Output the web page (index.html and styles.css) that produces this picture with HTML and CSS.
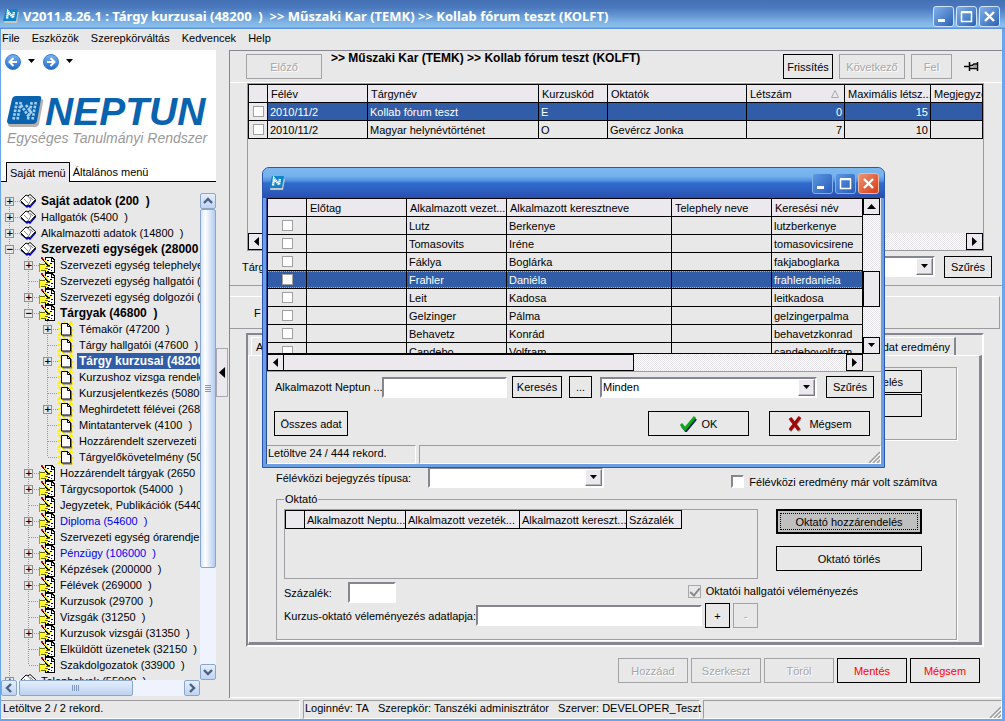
FILE: index.html
```html
<!DOCTYPE html>
<html lang="hu">
<head>
<meta charset="utf-8">
<title>Neptun</title>
<link rel="stylesheet" href="styles.css">
</head>
<body>
<svg class="defs" aria-hidden="true">
  <defs>
    <linearGradient id="ball" x1="0" y1="0" x2="0" y2="1"><stop offset="0" stop-color="#7fb4ee"/><stop offset="1" stop-color="#1d69cc"/></linearGradient>
    <symbol id="i-app" viewBox="0 0 16 16">
      <path d="M3 4h13l-2 11H1z" fill="#c8c4be"/>
      <path d="M3 1h12l-2 12H0z" fill="#0f86cc"/>
      <path d="M4 10.500l1-7 5 6 1-6" fill="none" stroke="#fff" stroke-width="2.400" stroke-dasharray="1.500 .4"/>
    </symbol>
    <symbol id="i-book" viewBox="0 0 16 14">
      <path d="M1 8l6 5 1-1 2 1 6-7" fill="none" stroke="#0000c8" stroke-width="1.500"/>
      <path d="M.5 6.500L6 1l2 1 2-1.500 5.500 5L10 11.500l-2-.5-2 1z" fill="#fff" stroke="#000"/>
      <path d="M8 2l3 4-3 5M4 5l4 4M10 3l3 3" fill="none" stroke="#555" stroke-width=".7"/>
    </symbol>
    <symbol id="i-hand" viewBox="0 0 16 16" shape-rendering="crispEdges">
      <path d="M6 .5h7l2.500 2.500v12.500H6z" fill="#fff" stroke="#000"/>
      <path d="M12.500 1v3H15M8 3h2M11 6h2M9 12h2M12 10h2M8 14h2M12 13h1" fill="none" stroke="#000"/>
      <path d="M1 6h4l2 1h5v2H9v3l-2 2H1z" fill="#ffff2a"/>
      <path d="M1 7h5M7 9h4M6 11h3M2 13.500h5" stroke="#6c6c00" fill="none"/>
      <path d="M.5 6v9" stroke="#00c8d8"/>
      <path d="M3 1l7 8" stroke="#000" stroke-width="2"/>
      <path d="M4 1l6 7" stroke="#ffe800"/><path d="M2 0h2v2H2z" fill="#d00"/>
    </symbol>
    <symbol id="i-page" viewBox="0 0 16 16">
      <path d="M0 1l4 4M6 0l1 3M14 0l-3 3M11 4l4-1M0 8h4M0 15l4-4M12 9h4M12 12l3 3M5 13v3M11 14l1 2" stroke="#fff000" stroke-width="2"/>
      <path d="M5 15h9M13.500 6v9" stroke="#777"/>
      <path d="M3.500 2.500h6l3 3v8.500h-9z" fill="#fff" stroke="#000"/>
      <path d="M9.500 2.500v3h3" fill="none" stroke="#000"/>
    </symbol>
    <symbol id="i-min" viewBox="0 0 19 19"><path d="M4 12h7v3H4z" fill="#fff"/></symbol>
    <symbol id="i-max" viewBox="0 0 19 19"><path d="M4 5.500h10.500v9H4.500V5M4 5h11" fill="none" stroke="#fff" stroke-width="1.500"/><path d="M4 4h11v2H4z" fill="#fff"/></symbol>
    <symbol id="i-x" viewBox="0 0 19 19"><path d="M5 5l9 9M14 5l-9 9" stroke="#fff" stroke-width="2.400"/></symbol>
    <symbol id="i-down" viewBox="0 0 9 5"><path d="M1 0h7L4.500 4z"/></symbol>
    <symbol id="i-up" viewBox="0 0 9 5"><path d="M0 5h9L4.500 0z"/></symbol>
    <symbol id="i-left" viewBox="0 0 5 9"><path d="M5 0v9L0 4.500z"/></symbol>
    <symbol id="i-right" viewBox="0 0 5 9"><path d="M0 0v9l5-4.500z"/></symbol>
    <symbol id="i-chev" viewBox="0 0 10 10"><path d="M1 7l4-4 4 4" fill="none" stroke="#4d6185" stroke-width="2.400"/></symbol>
    <symbol id="i-grip" viewBox="0 0 12 12"><path d="M1 12L12 1M5 12l7-7M9 12l3-3" stroke="#9c9c9c" stroke-width="1.500"/><path d="M3 12l9-9M7 12l5-5" stroke="#fff"/></symbol>
  </defs>
</svg>

<div class="window">
  <header class="titlebar">
    <svg class="i16"><use href="#i-app"/></svg>
    <h1>V2011.8.26.1 : Tárgy kurzusai (48200&nbsp; )&nbsp; &gt;&gt; Műszaki Kar (TEMK) &gt;&gt; Kollab fórum teszt (KOLFT)</h1>
    <div class="winbtns">
      <button type="button" aria-label="Kis méret"><svg><use href="#i-min"/></svg></button>
      <button type="button" aria-label="Teljes méret"><svg><use href="#i-max"/></svg></button>
      <button type="button" aria-label="Bezárás"><svg><use href="#i-x"/></svg></button>
    </div>
  </header>
  <nav class="menubar">
    <a href="#">File</a><a href="#">Eszközök</a><a href="#">Szerepkörváltás</a><a href="#">Kedvencek</a><a href="#">Help</a>
  </nav>

  <div class="main">
    <aside class="sidebar">
      <div class="brand">
        <div class="history">
          <button type="button" aria-label="Vissza"><svg class="i16" viewBox="0 0 16 16"><circle cx="8" cy="8" r="7.500" fill="url(#ball)" stroke="#3a7cd0"/><path d="M8.500 4L4.500 8l4 4M4.500 8H12" fill="none" stroke="#fff" stroke-width="2"/></svg></button>
          <svg class="drop"><use href="#i-down"/></svg>
          <button type="button" aria-label="Előre"><svg class="i16" viewBox="0 0 16 16"><circle cx="8" cy="8" r="7.500" fill="url(#ball)" stroke="#3a7cd0"/><path d="M7.500 4l4 4-4 4M11.500 8H4" fill="none" stroke="#fff" stroke-width="2"/></svg></button>
          <svg class="drop"><use href="#i-down"/></svg>
        </div>
        <div class="logo">
          <svg class="emblem" viewBox="0 0 37 32">
            <path d="M9 3h25q3 0 2 3l-4 22q-1 3-4 3H4q-3 0-3-3z" fill="#b5b3b2"/>
            <path d="M9 0h23q3 0 2 3l-4 22q-1 3-4 3H3q-3 0-3-3L5 3q1-3 4-3z" fill="#0a63ae"/>
            <path d="M6.500 23.500L10 5M10.500 23.500L14 5M14 9l8 12M19 9l6 9M21 23.500L25 5M25.500 23.500L29 5" fill="none" stroke="#a9d0ee" stroke-width="2.600" stroke-dasharray="2.600 1.200"/>
          </svg>
          <span class="logo-name">NEPTUN</span>
        </div>
        <p class="tagline">Egységes Tanulmányi Rendszer</p>
        <div class="menutabs"><button type="button" class="on">Saját menü</button><button type="button">Általános menü</button></div>
      </div>
      <div class="treebox">
        <ul class="tree">
          <li class="l0 first"><b class="pm">+</b><svg><use href="#i-book"/></svg><a href="#" class="bold">Saját adatok (200&nbsp; )</a></li>
          <li class="l0"><b class="pm">+</b><svg><use href="#i-book"/></svg><a href="#">Hallgatók (5400&nbsp; )</a></li>
          <li class="l0"><b class="pm">+</b><svg><use href="#i-book"/></svg><a href="#">Alkalmazotti adatok (14800&nbsp; )</a></li>
          <li class="l0"><b class="pm">−</b><svg><use href="#i-book"/></svg><a href="#" class="bold">Szervezeti egységek (28000&nbsp; )</a></li>
          <li class="l1"><b class="pm">+</b><svg><use href="#i-hand"/></svg><a href="#">Szervezeti egység telephelyei</a></li>
          <li class="l1"><b></b><svg><use href="#i-hand"/></svg><a href="#">Szervezeti egység hallgatói (2</a></li>
          <li class="l1"><b class="pm">+</b><svg><use href="#i-hand"/></svg><a href="#">Szervezeti egység dolgozói (2</a></li>
          <li class="l1"><b class="pm">−</b><svg><use href="#i-hand"/></svg><a href="#" class="bold">Tárgyak (46800&nbsp; )</a></li>
          <li class="l2"><b class="pm">+</b><svg><use href="#i-page"/></svg><a href="#">Témakör (47200&nbsp; )</a></li>
          <li class="l2"><b></b><svg><use href="#i-page"/></svg><a href="#">Tárgy hallgatói (47600&nbsp; )</a></li>
          <li class="l2"><b class="pm">+</b><svg><use href="#i-page"/></svg><a href="#" class="bold sel">Tárgy kurzusai (48200&nbsp; )</a></li>
          <li class="l2"><b></b><svg><use href="#i-page"/></svg><a href="#">Kurzushoz vizsga rendelé</a></li>
          <li class="l2"><b></b><svg><use href="#i-page"/></svg><a href="#">Kurzusjelentkezés (50800</a></li>
          <li class="l2"><b class="pm">+</b><svg><use href="#i-page"/></svg><a href="#">Meghirdetett félévei (2684</a></li>
          <li class="l2"><b></b><svg><use href="#i-page"/></svg><a href="#">Mintatantervek (4100&nbsp; )</a></li>
          <li class="l2"><b></b><svg><use href="#i-page"/></svg><a href="#">Hozzárendelt szervezeti e</a></li>
          <li class="l2 last"><b></b><svg><use href="#i-page"/></svg><a href="#">Tárgyelőkövetelmény (50</a></li>
          <li class="l1"><b class="pm">+</b><svg><use href="#i-hand"/></svg><a href="#">Hozzárendelt tárgyak (2650&nbsp; )</a></li>
          <li class="l1"><b class="pm">+</b><svg><use href="#i-hand"/></svg><a href="#">Tárgycsoportok (54000&nbsp; )</a></li>
          <li class="l1"><b></b><svg><use href="#i-hand"/></svg><a href="#">Jegyzetek, Publikációk (5440</a></li>
          <li class="l1"><b class="pm">+</b><svg><use href="#i-hand"/></svg><a href="#" class="blue">Diploma (54600&nbsp; )</a></li>
          <li class="l1"><b></b><svg><use href="#i-hand"/></svg><a href="#">Szervezeti egység órarendje (</a></li>
          <li class="l1"><b class="pm">+</b><svg><use href="#i-hand"/></svg><a href="#" class="blue">Pénzügy (106000&nbsp; )</a></li>
          <li class="l1"><b class="pm">+</b><svg><use href="#i-hand"/></svg><a href="#">Képzések (200000&nbsp; )</a></li>
          <li class="l1"><b class="pm">+</b><svg><use href="#i-hand"/></svg><a href="#">Félévek (269000&nbsp; )</a></li>
          <li class="l1"><b></b><svg><use href="#i-hand"/></svg><a href="#">Kurzusok (29700&nbsp; )</a></li>
          <li class="l1"><b></b><svg><use href="#i-hand"/></svg><a href="#">Vizsgák (31250&nbsp; )</a></li>
          <li class="l1"><b class="pm">+</b><svg><use href="#i-hand"/></svg><a href="#">Kurzusok vizsgái (31350&nbsp; )</a></li>
          <li class="l1"><b></b><svg><use href="#i-hand"/></svg><a href="#">Elküldött üzenetek (32150&nbsp; )</a></li>
          <li class="l1 last"><b></b><svg><use href="#i-hand"/></svg><a href="#">Szakdolgozatok (33900&nbsp; )</a></li>
          <li class="l0"><b class="pm">+</b><svg><use href="#i-book"/></svg><a href="#">Telephelyek (55000&nbsp; )</a></li>
        </ul>
        <div class="xpv"><i class="xpb"><svg><use href="#i-chev"/></svg></i><i class="xpt"></i><i class="xpb"><svg class="r180"><use href="#i-chev"/></svg></i></div>
        <div class="xph"><i class="xpb"><svg class="r270"><use href="#i-chev"/></svg></i><i class="xpt"></i><i class="xpb"><svg class="r90"><use href="#i-chev"/></svg></i></div>
      </div>
    </aside>
    <div class="splitter"><button type="button" aria-label="Menü elrejtése"><svg><use href="#i-left"/></svg></button></div>

    <main class="content">
      <div class="toolbar">
        <button type="button" class="btn w75" disabled>Előző</button>
        <h2>&gt;&gt; Műszaki Kar (TEMK) &gt;&gt; Kollab fórum teszt (KOLFT)</h2>
        <button type="button" class="btn w49">Frissítés</button>
        <button type="button" class="btn w65" disabled>Következő</button>
        <button type="button" class="btn w41" disabled>Fel</button>
        <svg class="pin" viewBox="0 0 15 11"><path d="M0 5.500h5M5.500 1v9M13.500 1v9M6 4.500h2l2-1.500h3M6 7.500h7" fill="none" stroke="#000" stroke-width="1.500"/><path d="M9 4h4v3H9z" fill="#999"/></svg>
      </div>
      <section class="listpanel">
        <div class="gridbox">
          <table class="grid courses">
            <colgroup><col class="c19"><col class="c100"><col class="c171"><col class="c69"><col class="c139"><col class="c99"><col class="c85"><col></colgroup>
            <thead><tr><th></th><th>Félév</th><th>Tárgynév</th><th>Kurzuskód</th><th>Oktatók</th><th><span class="sort">Létszám<svg viewBox="0 0 8 8"><path d="M.5 7.500h7L4 .5z" fill="none" stroke="#aaa"/></svg></span></th><th>Maximális létsz...</th><th>Megjegyzé</th></tr></thead>
            <tbody>
              <tr class="sel"><td class="ck"><input type="checkbox" aria-label="Kollab fórum teszt"></td><td>2010/11/2</td><td>Kollab fórum teszt</td><td>E</td><td></td><td class="num">0</td><td class="num">15</td><td></td></tr>
              <tr><td class="ck"><input type="checkbox" aria-label="Magyar helynévtörténet"></td><td>2010/11/2</td><td>Magyar helynévtörténet</td><td>O</td><td>Gevércz Jonka</td><td class="num">7</td><td class="num">10</td><td></td></tr>
            </tbody>
          </table>
          <div class="hscroll"><i class="sb"><svg class="v"><use href="#i-left"/></svg></i><i class="track"></i><i class="sb"><svg class="v"><use href="#i-right"/></svg></i></div>
        </div>
        <div class="filter">
          <label for="f1">Tárg</label>
          <div class="combo"><select id="f1"><option></option></select><i class="arrow"><svg><use href="#i-down"/></svg></i></div>
          <button type="button" class="btn small w47">Szűrés</button>
        </div>
      </section>
      <section class="infopanel">F</section>
      <section class="tabs">
        <div class="tabrow"><button type="button">A</button><button type="button">dat eredmény</button></div>
        <div class="page">
          <div class="group">
            <button type="button" class="btn">elés</button>
            <button type="button" class="btn" aria-label="Törlés"></button>
          </div>
          <div class="typerow">
            <label for="f2">Félévközi bejegyzés típusa:</label>
            <div class="combo"><select id="f2"><option></option></select><i class="arrow"><svg><use href="#i-down"/></svg></i></div>
            <label class="chk"><input type="checkbox"><span>Félévközi eredmény már volt számítva</span></label>
          </div>
          <fieldset>
            <legend>Oktató</legend>
            <div class="teachers">
              <div class="tbox">
                <table class="grid small-grid">
                  <colgroup><col class="c19"><col class="c101"><col class="c114"><col class="c107"><col class="c54"></colgroup>
                  <thead><tr><th></th><th>Alkalmazott Neptu...</th><th>Alkalmazott vezeték...</th><th>Alkalmazott kereszt...</th><th>Százalék</th></tr></thead>
                </table>
              </div>
              <div class="tbtns"><button type="button" class="btn focus">Oktató hozzárendelés</button><button type="button" class="btn">Oktató törlés</button></div>
            </div>
            <div class="pctrow">
              <label for="f3">Százalék:</label><input id="f3" type="text" class="inp">
              <label class="chk dis"><input type="checkbox" checked disabled><span>Oktatói hallgatói véleményezés</span></label>
            </div>
            <div class="evalrow">
              <label for="f4">Kurzus-oktató véleményezés adatlapja:</label><input id="f4" type="text" class="inp">
              <button type="button" class="btn sq">+</button><button type="button" class="btn sq" disabled>-</button>
            </div>
          </fieldset>
        </div>
      </section>
      <div class="actions">
        <button type="button" class="btn" disabled>Hozzáad</button><button type="button" class="btn" disabled>Szerkeszt</button><button type="button" class="btn" disabled>Töröl</button><button type="button" class="btn red">Mentés</button><button type="button" class="btn red">Mégsem</button>
      </div>
    </main>
  </div>
  <footer class="status"><span class="s1">Letöltve 2 / 2 rekord.</span><span class="s2">Loginnév: TA&nbsp;&nbsp; Szerepkör: Tanszéki adminisztrátor&nbsp;&nbsp; Szerver: DEVELOPER_Teszt</span><span class="s3"><svg class="grip"><use href="#i-grip"/></svg></span></footer>
</div>
<div class="desktop"></div>

<div class="dialog" role="dialog" aria-label="Alkalmazottak">
  <div class="dtitle">
    <svg class="i16"><use href="#i-app"/></svg>
    <div class="winbtns">
      <button type="button" aria-label="Kis méret"><svg><use href="#i-min"/></svg></button>
      <button type="button" aria-label="Teljes méret"><svg><use href="#i-max"/></svg></button>
      <button type="button" class="close" aria-label="Bezárás"><svg><use href="#i-x"/></svg></button>
    </div>
  </div>
  <div class="dbody">
    <div class="dgrid">
      <div class="dclip">
        <table class="grid staff">
          <colgroup><col class="c39"><col class="c100"><col class="c100"><col class="c165"><col class="c100"><col></colgroup>
          <thead><tr><th></th><th>Előtag</th><th>Alkalmazott vezet...</th><th>Alkalmazott keresztneve</th><th>Telephely neve</th><th>Keresési név</th></tr></thead>
          <tbody>
            <tr><td class="ck"><input type="checkbox" aria-label="Lutz"></td><td></td><td>Lutz</td><td>Berkenye</td><td></td><td>lutzberkenye</td></tr>
            <tr><td class="ck"><input type="checkbox" aria-label="Tomasovits"></td><td></td><td>Tomasovits</td><td>Iréne</td><td></td><td>tomasovicsirene</td></tr>
            <tr><td class="ck"><input type="checkbox" aria-label="Fáklya"></td><td></td><td>Fáklya</td><td>Boglárka</td><td></td><td>fakjaboglarka</td></tr>
            <tr class="sel dots"><td class="ck"><input type="checkbox" aria-label="Frahler"></td><td></td><td>Frahler</td><td>Daniéla</td><td></td><td>frahlerdaniela</td></tr>
            <tr><td class="ck"><input type="checkbox" aria-label="Leit"></td><td></td><td>Leit</td><td>Kadosa</td><td></td><td>leitkadosa</td></tr>
            <tr><td class="ck"><input type="checkbox" aria-label="Gelzinger"></td><td></td><td>Gelzinger</td><td>Pálma</td><td></td><td>gelzingerpalma</td></tr>
            <tr><td class="ck"><input type="checkbox" aria-label="Behavetz"></td><td></td><td>Behavetz</td><td>Konrád</td><td></td><td>behavetzkonrad</td></tr>
            <tr><td class="ck"><input type="checkbox" aria-label="Candebo"></td><td></td><td>Candebo</td><td>Volfram</td><td></td><td>candebovolfram</td></tr>
          </tbody>
        </table>
      </div>
      <div class="vscroll"><i class="sb"><svg class="h"><use href="#i-up"/></svg></i><i class="track"></i><i class="thumb"></i><i class="track2"></i><i class="sb"><svg class="h"><use href="#i-down"/></svg></i></div>
      <div class="hscroll"><i class="sb"><svg class="v"><use href="#i-left"/></svg></i><i class="thumb"></i><i class="track"></i><i class="sb"><svg class="v"><use href="#i-right"/></svg></i></div>
    </div>
    <div class="dsearch">
      <label for="d1">Alkalmazott Neptun ...</label><input id="d1" type="text" class="inp">
      <button type="button" class="btn small w49">Keresés</button>
      <button type="button" class="btn small w22">...</button>
      <div class="combo"><select aria-label="Szűrő"><option>Minden</option></select><i class="arrow"><svg><use href="#i-down"/></svg></i></div>
      <button type="button" class="btn small w47">Szűrés</button>
    </div>
    <div class="dbtns">
      <button type="button" class="btn w73">Összes adat</button>
      <button type="button" class="btn w100"><svg viewBox="0 0 17 16"><path d="M2 10l4 5L16 3" fill="none" stroke="#102a50" stroke-width="2.500"/><path d="M1 8l4 5L15 1" fill="none" stroke="#0faa18" stroke-width="3"/></svg>OK</button>
      <button type="button" class="btn w100"><svg viewBox="0 0 17 16"><path d="M4 3l9 12M13 3L3 15" stroke="#999" stroke-width="3"/><path d="M3 2l9 12M13 1L3 14" stroke="#a00808" stroke-width="3.400"/></svg>Mégsem</button>
    </div>
    <div class="dstatus"><span class="s1">Letöltve 24 / 444 rekord.</span><span class="s3"><svg class="grip"><use href="#i-grip"/></svg></span></div>
  </div>
</div>
</body>
</html>
```
FILE: styles.css
```css
* { box-sizing: border-box; }
body {
  margin: 0;
  min-height: 100vh;
  display: flex;
  flex-direction: column;
  position: relative;
  background: #e8e8e8;
  color: #000;
  font: 11px/14px "Liberation Sans", Arial, sans-serif;
}
.defs { position: absolute; width: 0; height: 0; }
a { color: inherit; text-decoration: none; }
button, input, select { font: inherit; color: inherit; margin: 0; padding: 0; border-radius: 0; }
svg { display: block; flex: none; }
i { font-style: normal; }
.i16 { width: 16px; height: 16px; }

.window {
  flex: 1;
  display: flex;
  flex-direction: column;
  border: solid #69a5ea;
  border-width: 0 3px 3px 1px;
}
.desktop { height: 2px; background: linear-gradient(90deg, #e4eaf4 65px, #8d929c 65px 220px, #e9e9e9 220px 820px, #3d6cc0 820px 823px, #f4f4f4 823px); }

.titlebar {
  height: 29px;
  margin: 0 -3px 0 -1px;
  padding: 3px 5px 0 3px;
  display: flex;
  align-items: center;
  gap: 4px;
  background: linear-gradient(#4470b4 0, #4c7abf 8px, #6699d4 16px, #7fb3e5 22px, #8cc0ec 27px, #5b92dc 28px);
  color: #fff;
}
.titlebar h1 { flex: 1; margin: 0; font: bold 13px/18px "Noto Sans", "Open Sans", sans-serif; white-space: nowrap; }
.winbtns { display: flex; gap: 2px; }
.winbtns button { width: 21px; height: 21px; border: 1px solid #cfe2fa; border-radius: 3px; background: linear-gradient(135deg, #7fb0ea, #2c62b4); }
.winbtns svg { width: 19px; height: 19px; }
.winbtns .close { background: linear-gradient(135deg, #ee9273, #d83c14); }

.menubar { height: 21px; padding: 1px 0 0 1px; display: flex; gap: 12px; line-height: 16px; }

.main { flex: 1; display: flex; }
.sidebar { width: 215px; display: flex; flex-direction: column; }
.brand { background: #fff; display: flex; flex-direction: column; height: 132px; border-bottom: 1px solid #000; }
.history { display: flex; align-items: center; gap: 6px; padding: 3px 0 0 4px; height: 20px; }
.history button { border: 0; background: none; width: 16px; height: 16px; }
.drop { width: 9px; height: 5px; }
.drop + button { margin-left: 1px; }
.logo { display: flex; align-items: center; margin: 24px 0 0 6px; height: 36px; gap: 1px; }
.emblem { width: 37px; height: 32px; }
.logo-name { font: italic bold 39px/36px "Liberation Sans", Arial, sans-serif; color: #0a63ae; }
.tagline { margin: 0 0 0 6px; font: italic 14px/16px "Liberation Sans", sans-serif; color: #999; white-space: nowrap; }
.menutabs { display: flex; margin: auto 0 -1px 5px; }
.menutabs button { height: 19px; padding: 0 3px; border: 0; background: none; }
.menutabs .on { height: 20px; padding: 0 3px; border: 1px solid #000; border-bottom: 0; background: #ebe9ee; }

.treebox {
  flex: 1 1 0;
  min-height: 0;
  margin-bottom: 3px;
  padding-top: 11px;
  display: grid;
  grid-template: minmax(0, 1fr) 16px / minmax(0, 1fr) 16px;
  background: #e8e8e8;
  overflow: hidden;
}
.tree { margin: 0; padding: 0; list-style: none; overflow: hidden; height: 100%; }
.tree li {
  --v: repeating-linear-gradient(#999 0 1px, transparent 1px 2px);
  height: 16px;
  display: flex;
  align-items: center;
  background: var(--v) 8px 0 / 1px 100% no-repeat;
  white-space: nowrap;
}
.tree li.l0 { padding-left: 4px; }
.tree li.first { background-size: 1px 8px; background-position: 8px 8px; }
.tree li.l1 { padding-left: 23px; background: var(--v) 8px 0 / 1px 100% no-repeat, var(--v) 27px 0 / 1px 100% no-repeat; }
.tree li.l1.last { background-size: 1px 100%, 1px 8px; }
.tree li.l2 { padding-left: 42px; background: var(--v) 8px 0 / 1px 100% no-repeat, var(--v) 27px 0 / 1px 100% no-repeat, var(--v) 46px 0 / 1px 100% no-repeat; }
.tree li.l2.last { background-size: 1px 100%, 1px 100%, 1px 8px; }
.tree b { width: 9px; height: 9px; flex: none; font: bold 9px/7px "DejaVu Sans", sans-serif; text-align: center; }
.tree b.pm { border: 1px solid #909090; background: #e8e8e8; position: relative; }
.tree b.pm::after { content: ""; position: absolute; left: 9px; top: 3px; width: 5px; height: 1px; background: repeating-linear-gradient(90deg, #999 0 1px, transparent 1px 2px); }
.tree b + svg { margin-left: 6px; width: 16px; height: 16px; }
.tree b:not(.pm) { width: 15px; background: repeating-linear-gradient(90deg, #999 0 1px, transparent 1px 2px) 5px 4px / 10px 1px no-repeat; }
.tree b:not(.pm) + svg { margin-left: 0; }
.tree a { margin-left: 3px; padding: 0 2px; line-height: 16px; }
.tree .bold { font-weight: bold; font-size: 12px; }
.tree .sel { background: #315ca8; color: #fff; flex: 1; }
.tree .blue { color: #0000f0; }
.xpv { display: flex; flex-direction: column; background: #eef3fd; }
.xph { display: flex; background: #eef3fd; }
.xpb { flex: none; width: 16px; height: 16px; border: 1px solid #8ba6cc; border-radius: 2px; background: linear-gradient(#e4eefc, #bfd4f2); display: grid; place-items: center; }
.xpb svg { width: 10px; height: 10px; }
.r90 { transform: rotate(90deg); }
.r180 { transform: rotate(180deg); }
.r270 { transform: rotate(270deg); }
.xpv .xpt { height: 359px; margin-bottom: auto; border: 1px solid #8ba6cc; border-radius: 2px; background: repeating-linear-gradient(#8098c0 0 1px, transparent 1px 2px) center / 6px 8px no-repeat, linear-gradient(90deg, #d4e4fa, #fff 30%, #b4ccee); }
.xph .xpt { width: 114px; margin: 0 auto 0 2px; border: 1px solid #8ba6cc; border-radius: 2px; background: repeating-linear-gradient(90deg, #8098c0 0 1px, transparent 1px 2px) center / 8px 6px no-repeat, linear-gradient(#e4eefc, #bcd2f0); }

.splitter { width: 13px; display: flex; align-items: center; padding-bottom: 5px; }
.splitter button { width: 12px; height: 49px; border: 1px solid #a8a8b0; background: #ebe9ee; display: grid; place-items: center; }
.splitter svg { width: 8px; height: 11px; }

.content { flex: 1; min-width: 0; border: solid #868690; border-width: 1px 0 0 1px; display: flex; flex-direction: column; margin-bottom: 1px; }
.btn {
  height: 25px;
  flex: none;
  border: 1px solid #000;
  background: #e8e8e8;
  display: flex;
  align-items: center;
  justify-content: center;
  white-space: nowrap;
}
.btn:disabled { border-color: #a3a3a5; color: #a6a6a8; text-shadow: 1px 1px 0 #fff; }
.btn.small { height: 22px; }
.btn.red { color: #f00; }
.w22 { width: 22px; } .w41 { width: 41px; } .w47 { width: 48px; } .w49 { width: 50px; } .w65 { width: 66px; } .w73 { width: 74px; } .w75 { width: 76px; } .w100 { width: 101px; }
.toolbar { height: 32px; padding: 3px 23px 0 16px; display: flex; gap: 6px; border-bottom: 1px solid #fff; }
.toolbar h2 { flex: 1; margin: -3px 0 0 3px; font: bold 12px/14px "Liberation Sans", Arial, sans-serif; white-space: nowrap; }
.pin { width: 15px; height: 11px; margin: 7px 0 0 6px; }

.listpanel { height: 203px; border-bottom: 1px solid #9c9ca0; padding: 0 18px 0 17px; }
.gridbox { height: 168px; border: 1px solid #9a9a9e; display: flex; flex-direction: column; justify-content: space-between; }
.grid { border-collapse: collapse; table-layout: fixed; }
.courses { width: 100%; }
.grid th, .grid td { height: 18px; padding: 0 2px; border: 1px solid #000; font-weight: normal; text-align: left; line-height: 14px; white-space: nowrap; overflow: hidden; }
.grid th { background: #ebe9ee; padding: 0 0 0 3px; }
.grid .num { text-align: right; }
.grid .sel td { background: #315ca8; color: #fff; }
.grid .sel td.ck { background: #ebe9ee; }
.grid .dots td, .grid .dots td.ck { background: repeating-linear-gradient(90deg, #e0b050 0 1px, #315ca8 1px 2px) top / 100% 1px no-repeat, repeating-linear-gradient(90deg, #e0b050 0 1px, #315ca8 1px 2px) bottom / 100% 1px no-repeat, #315ca8; }
.ck input { appearance: none; display: block; width: 11px; height: 11px; margin: 0 auto; border: 1px solid #a0a0a0; background: #fff; }
.sort { display: flex; justify-content: space-between; align-items: center; padding-right: 5px; }
.sort svg { width: 8px; height: 8px; }
.c19 { width: 19px; } .c39 { width: 39px; } .c54 { width: 55px; } .c69 { width: 69px; } .c85 { width: 86px; } .c99 { width: 98px; } .c100 { width: 100px; } .c101 { width: 101px; } .c107 { width: 107px; } .c114 { width: 114px; } .c139 { width: 139px; } .c165 { width: 165px; } .c171 { width: 171px; }

.hscroll { display: flex; height: 17px; }
.sb { width: 17px; height: 17px; flex: none; border: 1px solid #000; background: #ebe9ee; display: grid; place-items: center; }
.sb .v { width: 5px; height: 9px; }
.sb .h { width: 9px; height: 5px; }
.track, .track2 { flex: 1; background: repeating-conic-gradient(#fff 0 25%, #e4e2e6 0 50%) 0 0 / 2px 2px; }
.thumb { border: 1px solid #000; background: #ebe9ee; flex: none; }

.filter { display: flex; padding-top: 5px; margin: 0 -8px 0 -5px; }
.filter label { width: 22px; line-height: 22px; }
.filter .combo { flex: 1; margin-right: 9px; }
.combo { display: flex; height: 21px; border: 2px solid; border-color: #868690 #fff #fff #868690; background: #fff; }
.combo select { flex: 1; min-width: 0; appearance: none; border: 0; background: #fff; padding-left: 1px; }
.arrow { width: 17px; border: 1px solid; border-color: #fff #77777f #77777f #fff; box-shadow: inset -1px -1px 0 #b8b8bc; background: #ebe9ee; display: grid; place-items: center; }
.arrow svg { width: 9px; height: 5px; }
.inp { width: 48px; height: 21px; border: 2px solid; border-color: #868690 #fff #fff #868690; background: #fff; min-width: 0; }

.infopanel { height: 33px; margin: 10px 2px 0 0; padding: 9px 24px; border: solid #9c9ca0; border-width: 0 1px 1px 0; border-top: 1px solid #fff; }

.tabs { margin: 4px 18px 0 16px; border: 2px solid; border-color: #868690 #fff #fff #868690; }
.tabrow { display: flex; justify-content: space-between; padding: 2px 26px 0 3px; }
.tabrow button { height: 18px; padding: 0 4px; border: 1px solid; border-color: #fff #868690 transparent #fff; border-bottom: 0; border-right-width: 2px; background: #e8e8e8; }
.page { border: solid; border-width: 1px 3px 3px 1px; border-color: #fff #868690 #868690 #fff; padding: 11px 22px 2px 27px; }
.group { height: 73px; padding: 2px 34px 0; border: 1px solid #a0a0a4; box-shadow: 1px 1px 0 #fff; display: flex; flex-direction: column; align-items: flex-end; gap: 1px; }
.group .btn { width: 146px; height: 23px; justify-content: flex-end; padding-right: 18px; }
.typerow { display: flex; align-items: center; margin-top: 27px; }
.typerow > label:first-child { width: 152px; }
.typerow .combo { width: 176px; margin-right: auto; }
.chk { display: flex; align-items: center; gap: 5px; }
.chk input { appearance: none; width: 13px; height: 13px; border: 2px solid; border-color: #868690 #fff #fff #868690; background: #fff; }
.typerow .chk { padding: 8px 20px 0 0; height: 21px; }
.dis input { border: 1px solid #a8a8ac; background: #e8e8e8; position: relative; }
.dis input::after { content: ""; position: absolute; left: 3px; top: 0; width: 4px; height: 8px; border: solid #8a8a8e; border-width: 0 2px 2px 0; transform: rotate(40deg); }
fieldset { margin: 4px 0 0; padding: 3px 34px 11px 7px; border: 1px solid #a0a0a4; box-shadow: 1px 1px 0 #fff; min-width: 0; }
legend { padding: 0 1px; background: #e8e8e8; line-height: 14px; }
.teachers { display: flex; justify-content: space-between; }
.tbox { width: 474px; height: 70px; border: 1px solid #a0a0a4; }
.small-grid { width: 396px; }
.small-grid th { padding-left: 2px; }
.tbtns { width: 146px; display: flex; flex-direction: column; gap: 12px; }
.focus { border-width: 2px; background: #c0c0c0; outline: 1px dotted #000; outline-offset: -5px; }
.pctrow { display: flex; align-items: center; margin-top: 3px; width: 474px; }
.pctrow > label:first-child { width: 64px; }
.pctrow .chk { margin: 0 -100px 3px auto; }
.evalrow { display: flex; align-items: center; width: 474px; gap: 3px; }
.evalrow label { width: 189px; white-space: nowrap; }
.evalrow .inp { flex: 1; }
.sq { width: 25px; }
.actions { display: flex; justify-content: flex-end; gap: 3px; padding: 11px 22px 14px; margin-top: auto; border-bottom: 1px solid #fff; }
.actions .btn { width: 70px; }

.status, .dstatus { display: flex; gap: 3px; height: 19px; }
.status { margin-top: 1px; }
.status span, .dstatus span { border: 1px solid; border-color: #9c9ca0 #fff #fff #9c9ca0; padding-left: 1px; line-height: 15px; white-space: nowrap; }
.status .s1 { width: 299px; padding-left: 2px; border-left: 0; }
.status .s2 { width: 397px; }
.s3 { flex: 1; display: flex; justify-content: flex-end; align-items: flex-end; }
.grip { width: 12px; height: 12px; }

.dialog {
  position: absolute;
  left: 262px;
  top: 167px;
  width: 623px;
  border: 1px solid #2a56b4;
  border-radius: 7px 7px 0 0;
  background: #6c9fe2;
  padding: 0 3px 3px;
}
.dtitle { height: 30px; margin: 0 -3px; border-radius: 6px 6px 0 0; padding: 0 5px 0 6px; display: flex; align-items: center; justify-content: space-between; background: linear-gradient(#7cb8ee 0, #74b2ec 8px, #4f8fe0 13px, #2f6ccc 15px, #2c60c0 22px, #2a50b0 29px); }
.dtitle .winbtns button { border-color: #7fb0ea; background: linear-gradient(135deg, #5a98e4, #2a5cb8); }
.dtitle .winbtns .close { border-color: #f0b8a0; background: linear-gradient(135deg, #ee9273, #d83c14); }
.dbody { background: #e8e8e8; border-left: 1px solid #2a4a9c; }
.dgrid { display: grid; grid-template: 156px 17px / minmax(0, 1fr) 18px; border-bottom: 1px solid #9c9ca0; }
.dclip { overflow: hidden; border-bottom: 1px solid #000; }
.staff { width: 100%; }
.vscroll { display: flex; flex-direction: column; padding-right: 1px; }
.vscroll .thumb { height: 36px; }
.vscroll .track { flex: 56; }
.vscroll .track2 { flex: 30; }
.dgrid .hscroll .thumb { width: 351px; margin-left: -1px; }
.dsearch { display: flex; align-items: center; padding: 4px 7px 0 8px; }
.dsearch label { width: 107px; white-space: nowrap; }
.dsearch .inp { width: 125px; margin-right: 5px; }
.dsearch .w22 { margin: 0 8px 0 7px; width: 23px; }
.dsearch .combo { flex: 1; margin-right: 9px; }
.dbtns { display: flex; gap: 20px; padding: 13px 11px 9px 7px; }
.dbtns .w73 { margin-right: auto; }
.dbtns svg { width: 17px; height: 16px; margin-right: 5px; }
.dstatus .s1 { width: 149px; border-left: 0; }
```
